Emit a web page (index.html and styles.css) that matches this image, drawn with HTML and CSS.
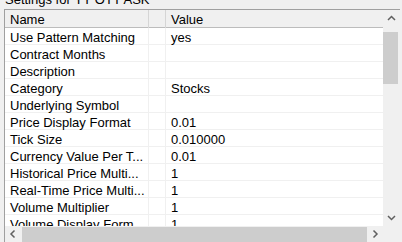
FILE: index.html
```
<!DOCTYPE html>
<html lang="en">

<head>
    <meta charset="UTF-8">
    <title>Settings</title>
    <link rel="stylesheet" href="styles.css">
</head>

<body>
    <div class="title">Settings for YY OTT ASK</div>

    <div class="frame">
        <div class="list">
            <div class="row head">
                <div class="cell name">Name</div>
                <div class="cell gap"></div>
                <div class="cell value">Value</div>
            </div>
            <div class="row"><div class="cell name">Use Pattern Matching</div><div class="cell gap"></div><div class="cell value">yes</div></div>
            <div class="row"><div class="cell name">Contract Months</div><div class="cell gap"></div><div class="cell value"></div></div>
            <div class="row"><div class="cell name">Description</div><div class="cell gap"></div><div class="cell value"></div></div>
            <div class="row"><div class="cell name">Category</div><div class="cell gap"></div><div class="cell value">Stocks</div></div>
            <div class="row"><div class="cell name">Underlying Symbol</div><div class="cell gap"></div><div class="cell value"></div></div>
            <div class="row"><div class="cell name">Price Display Format</div><div class="cell gap"></div><div class="cell value">0.01</div></div>
            <div class="row"><div class="cell name">Tick Size</div><div class="cell gap"></div><div class="cell value">0.010000</div></div>
            <div class="row"><div class="cell name">Currency Value Per T...</div><div class="cell gap"></div><div class="cell value">0.01</div></div>
            <div class="row"><div class="cell name">Historical Price Multi...</div><div class="cell gap"></div><div class="cell value">1</div></div>
            <div class="row"><div class="cell name">Real-Time Price Multi...</div><div class="cell gap"></div><div class="cell value">1</div></div>
            <div class="row"><div class="cell name">Volume Multiplier</div><div class="cell gap"></div><div class="cell value">1</div></div>
            <div class="row"><div class="cell name">Volume Display Form</div><div class="cell gap"></div><div class="cell value">1</div></div>
        </div>

        <!-- vertical scrollbar -->
        <div class="vscroll">
            <svg class="arrow" width="17" height="17" viewBox="0 0 17 17"><path d="M5 10 L8.5 6.5 L12 10" fill="none" stroke="#606060" stroke-width="1.5"/></svg>
            <div class="vthumb"></div>
            <div class="spacer"></div>
            <svg class="arrow" width="17" height="17" viewBox="0 0 17 17"><path d="M5 7 L8.5 10.5 L12 7" fill="none" stroke="#606060" stroke-width="1.5"/></svg>
        </div>

        <!-- horizontal scrollbar -->
        <div class="hscroll">
            <svg class="arrow" width="16" height="16" viewBox="0 0 16 16"><path d="M9.5 4.5 L6 8 L9.5 11.5" fill="none" stroke="#606060" stroke-width="1.5"/></svg>
            <div class="hthumb"></div>
            <svg class="arrow" width="16" height="16" viewBox="0 0 16 16"><path d="M6.5 4.5 L10 8 L6.5 11.5" fill="none" stroke="#606060" stroke-width="1.5"/></svg>
        </div>
        <div class="corner"></div>
    </div>
</body>

</html>
```

FILE: styles.css
```
/* base */
body {
    margin: 0;
    background-color: #f0f0f0;
    font-family: "Liberation Sans", Arial, sans-serif;
    font-size: 13px;
    color: #000;
    overflow: hidden;
}

.title {
    height: 17px;
    margin-top: -8px;
    padding-left: 5px;
    line-height: 15px;
    color: #000;
}

/* frame */
.frame {
    margin-left: 4px;
    width: 395px;
    height: 232px;
    border-top: 1px solid #a0a0a0;
    border-left: 1px solid #a0a0a0;
    display: grid;
    grid-template-columns: 378px 17px;
    grid-template-rows: 216px 16px;
}

/* list */
.list {
    background-color: #fff;
    overflow: hidden;
}

.row {
    display: grid;
    grid-template-columns: 144px 17px 1fr;
    height: 16px;
    line-height: 20px; /* sits the text low in the row, like the listview */
    border-bottom: 1px solid #f0f0f0;
    white-space: nowrap;
}

.row .cell {
    padding-left: 5px;
}

.row .name,
.row .gap {
    border-right: 1px solid #f0f0f0;
}

.row .value {
    padding-left: 5px;
}

.row.head {
    height: 17px;
    line-height: 20px;
    background-color: #f0f0f0;
    border-bottom: 1px solid #bcbcbc;
}

.row.head .name,
.row.head .gap {
    border-right: 1px solid #d5d5d5;
}

/* scrollbars */
.vscroll {
    display: flex;
    flex-direction: column;
    background-color: #f0f0f0;
}

.arrow {
    display: block;
    flex: none;
}

.vthumb {
    height: 52px;
    margin: 5px 2px 0 0;
    background-color: #cdcdcd;
}

.spacer {
    flex: 1;
}

.hscroll {
    display: flex;
    align-items: stretch;
    background-color: #f0f0f0;
}

.hthumb {
    flex: 1;
    margin: 1px 0 0 1px;
    background-color: #cdcdcd;
}

.corner {
    background-color: #f0f0f0;
}
```
